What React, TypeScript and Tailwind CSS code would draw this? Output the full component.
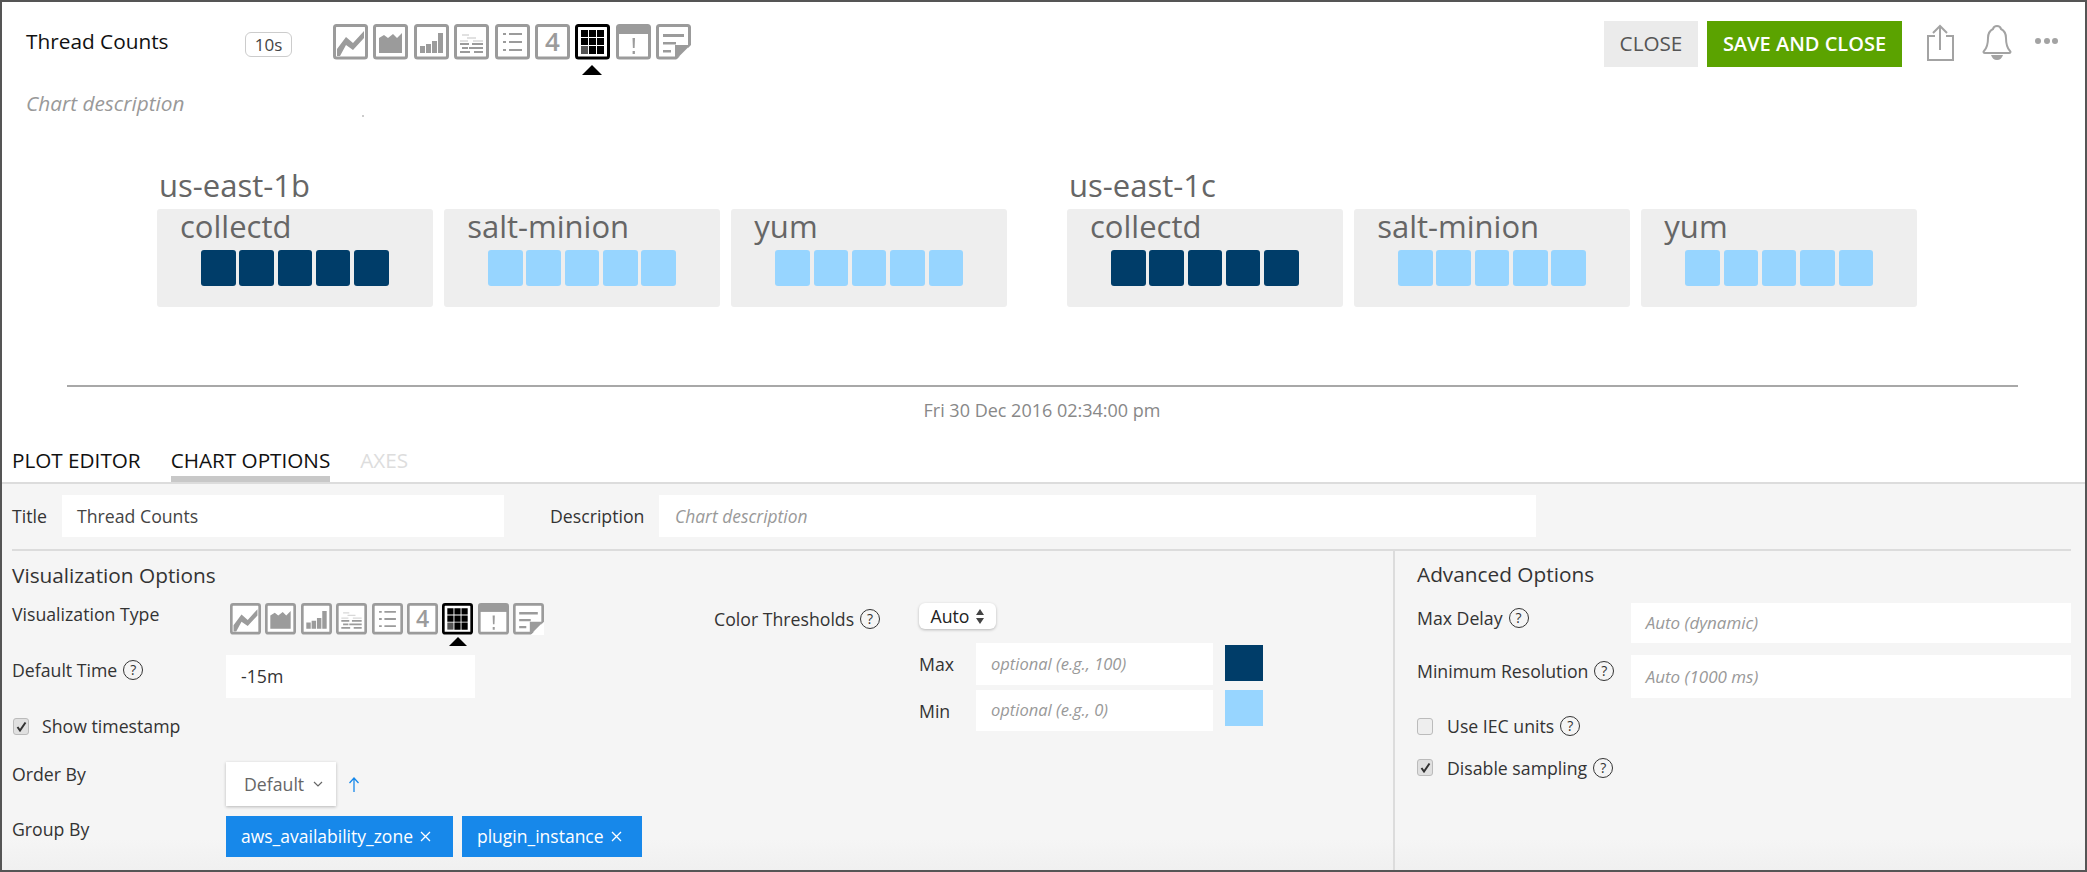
import React from 'react';

const FONT = "font-['Open_Sans','Noto_Sans',sans-serif]";

const VizIcon: React.FC<{ kind: number; size: number; active?: boolean }> = ({ kind, size, active }) => {
  const c = active ? '#000' : '#9b9b9b';
  return (
    <svg width={size} height={size + 1} viewBox="0 0 35 36" className="block shrink-0">
      <rect x="1.5" y="1.5" width="32" height="32.5" rx="2" fill="#fff" stroke={c} strokeWidth="3" />
      {kind === 0 && <path d="M4 32V25L13 13L20 19L31 7V14L20 26L13 21L7 32z" fill={c} />}
      {kind === 1 && <path d="M6 29V14L11 11L15 14L20 10L24 14L29 9V29z" fill={c} />}
      {kind === 2 && <path d="M6 22h5v7H6zM12 20h5v9h-5zM18 17h5v12h-5zM24 9h5v20h-5z" fill={c} />}
      {kind === 3 && (
        <g>
          <path d="M8 11h7M13 14h9M6 17h8M19 17h10" stroke="#d8d8d8" strokeWidth="1.5" />
          <path d="M6 20h9M18 20h11M8 24h6M15 24h14M6 28h10M20 28h9" stroke={c} strokeWidth="2" />
        </g>
      )}
      {kind === 4 && <path d="M8 10h3M14 10h13M8 18h3M14 18h13M8 26h3M14 26h13" stroke={c} strokeWidth="2" />}
      {kind === 5 && (
        <text x="17.5" y="27" textAnchor="middle" fontSize="26" fontWeight="600" fill={c} fontFamily="Open Sans, sans-serif">
          4
        </text>
      )}
      {kind === 6 && (
        <g fill="#000">
          <path d="M6 6h7v7H6zM14 6h7v7h-7zM22 6h7v7h-7zM6 14h7v7H6zM14 14h7v7h-7zM22 14h7v7h-7zM14 22h7v8h-7zM22 22h7v8h-7z" />
          <path d="M6 22h7v8H6z" fill="#555" />
        </g>
      )}
      {kind === 7 && (
        <g fill={c}>
          <path d="M1 1h33v9H1z" />
          <path d="M16.5 14h2.5l-.4 10h-1.7zM16.6 27h2.3v3h-2.3z" />
        </g>
      )}
      {kind === 8 && (
        <g>
          <path d="M7 10h21v3H7zM7 18h13v2.500H7zM7 26h8v2.500H7z" fill={c} />
          <path d="M35 21V36H20z" fill="#fff" />
          <path d="M34 21.500L20.500 35H19V21h15z" fill={c} />
        </g>
      )}
    </svg>
  );
};

const VizStrip: React.FC<{ size: number; gap: string; arrow: string }> = ({ size, gap, arrow }) => (
  <div className={`flex ${gap}`}>
    {[0, 1, 2, 3, 4, 5, 6, 7, 8].map(k => (
      <div key={k} className="relative">
        <VizIcon kind={k} size={size} active={k === 6} />
        {k === 6 && <div className={arrow} />}
      </div>
    ))}
  </div>
);

const Help: React.FC = () => (
  <span className="inline-flex h-[20px] w-[20px] shrink-0 items-center justify-center rounded-full border-[1.5px] border-[#333] text-[14px] leading-none text-[#333]">
    ?
  </span>
);

const Checkbox: React.FC<{ checked?: boolean }> = ({ checked }) => (
  <span
    className={`flex h-[17px] w-[16px] shrink-0 items-center justify-center rounded-[3px] border ${
      checked ? 'border-[#bbb] bg-[#e0e0e0]' : 'border-[#bbb] bg-[#eeeeee]'
    }`}
  >
    {checked && (
      <svg width="11" height="11" viewBox="0 0 11 11">
        <path d="M1.500 6L4 9.500L9.500 1.500" fill="none" stroke="#333" strokeWidth="2" />
      </svg>
    )}
  </span>
);

const Cell: React.FC<{ dark?: boolean }> = ({ dark }) => (
  <div className={`h-[36px] w-[34.500px] rounded-[3px] ${dark ? 'bg-[#003d69]' : 'bg-[#97d5ff]'}`} />
);

const Card: React.FC<{ name: string; dark?: boolean }> = ({ name, dark }) => (
  <div className="h-[98px] w-[276px] rounded-[3px] bg-[#eeeeee] pl-[23px]">
    <div className="h-[41px] text-[31px] leading-[34px] text-[#666]">{name}</div>
    <div className="ml-[21px] flex gap-[3.800px]">
      {[0, 1, 2, 3, 4].map(i => (
        <Cell key={i} dark={dark} />
      ))}
    </div>
  </div>
);

const Group: React.FC<{ zone: string; first: string }> = ({ zone, first }) => (
  <div className="w-[850px]">
    <div className="h-[37px] pl-[2px] text-[31px] leading-[26px] text-[#666]">{zone}</div>
    <div className="flex gap-[11.500px]">
      <Card name={first} dark />
      <Card name="salt-minion" />
      <Card name="yum" />
    </div>
  </div>
);

const Chip: React.FC<{ label: string; width: string }> = ({ label, width }) => (
  <div className={`flex h-[41px] ${width} items-center gap-[7px] bg-[#1788ea] pl-[15px] text-[17.500px] text-white`}>
    <span>{label}</span>
    <svg width="11" height="11" viewBox="0 0 11 11">
      <path d="M1 1l9 9M10 1l-9 9" stroke="#fff" strokeWidth="1.300" />
    </svg>
  </div>
);

export default function App() {
  return (
    <div className={`${FONT} flex h-[872px] w-[2087px] flex-col overflow-hidden border-2 border-[#555] bg-white`}>
      {/* header */}
      <div className="relative flex h-[110px] pl-[24px] pr-[27px] pt-[19px]">
        <div className="w-[219px]">
          <div className="mt-[3px] text-[20.800px] leading-[34px] text-[#111]">Thread Counts</div>
          <div className="mt-[33px] text-[20.800px] leading-[24px] text-[#999] italic">Chart description</div>
        </div>
        <div className="mt-[11px] mr-[41px] flex h-[25px] w-[47px] items-center justify-center rounded-[6px] border border-[#ccc] text-[17px] text-[#444]">
          10s
        </div>
        <div className="mt-[3px]">
          <VizStrip
            size={35}
            gap="gap-[5.400px]"
            arrow="absolute left-[7px] top-[41px] h-0 w-0 border-x-[10px] border-b-[10px] border-x-transparent border-b-black"
          />
        </div>
        <div className="ml-auto flex items-start">
          <div className="flex h-[46px] w-[94px] items-center justify-center bg-[#ebebeb] text-[20.700px] text-[#555]">CLOSE</div>
          <div className="ml-[9px] flex h-[46px] w-[195px] items-center justify-center bg-[#5ba300] text-[20px] font-semibold text-white">
            SAVE AND CLOSE
          </div>
          <svg width="28" height="38" viewBox="0 0 28 38" fill="none" stroke="#a3a3a3" strokeWidth="2" className="ml-[24px] mt-[3px]">
            <path d="M9 12H2v24h25V12h-7" />
            <path d="M14 26V2M7 9l7-7 7 7" />
          </svg>
          <svg width="30" height="37" viewBox="0 0 30 37" fill="none" stroke="#a3a3a3" strokeWidth="2" className="ml-[28px] mt-[3px]">
            <path d="M15 2c-2 0-3.500 1-4 3C7 7 6 10 6 14c0 6-1 10-4 13-1 1-.5 2 1 2h24c1.500 0 2-1 1-2-3-3-4-7-4-13 0-4-1-7-5-9-.5-2-2-3-4-3z" />
            <path d="M9 31h12c-1 3-3 5-6 5s-5-2-6-5z" fill="#a3a3a3" stroke="none" />
          </svg>
          <div className="ml-[23px] mt-[17px] flex gap-[2.500px]">
            <div className="h-[6px] w-[6px] rounded-full bg-[#a3a3a3]" />
            <div className="h-[6px] w-[6px] rounded-full bg-[#a3a3a3]" />
            <div className="h-[6px] w-[6px] rounded-full bg-[#a3a3a3]" />
          </div>
        </div>
        <div className="absolute left-[360px] top-[113px] h-[2px] w-[2px] bg-[#ccc]" />
      </div>

      {/* chart */}
      <div className="flex h-[273px] gap-[60px] pl-[155px] pt-[60px]">
        <Group zone="us-east-1b" first="collectd" />
        <Group zone="us-east-1c" first="collectd" />
      </div>

      {/* timestamp */}
      <div className="mx-[65px] h-[2px] w-[1951px] bg-[#a8a8a8]" />
      <div className="h-[48px] pr-[3px] pt-[11px] text-center text-[18px] leading-[24px] text-[#888]">Fri 30 Dec 2016 02:34:00 pm</div>

      {/* tabs */}
      <div className="flex h-[49px] items-start border-b-2 border-[#dcdcdc] pl-[10px] pt-[12px] text-[20.700px] leading-[26px]">
        <div className="text-[#111]">PLOT EDITOR</div>
        <div className="ml-[30px] h-[35px] border-b-[6px] border-[#c8c8c8] text-[#111]">CHART OPTIONS</div>
        <div className="ml-[30px] text-[#ddd]">AXES</div>
      </div>

      {/* options */}
      <div className="flex min-h-0 flex-1 flex-col bg-[linear-gradient(to_bottom,#f5f5f5_92%,#f0f0f0)] pl-[10px] text-[17.700px] text-[#333]">
        <div className="flex h-[65px] items-start pt-[11px]">
          <div className="w-[50px] pt-[9px] leading-[24px]">Title</div>
          <div className="flex h-[42px] w-[442px] items-center bg-white pl-[15px] text-[#444]">Thread Counts</div>
          <div className="ml-[46px] w-[109px] pt-[9px] leading-[24px]">Description</div>
          <div className="flex h-[42px] w-[877px] items-center bg-white pl-[16px] text-[17.400px] text-[#999] italic">Chart description</div>
        </div>
        <div className="flex min-h-0 flex-1">
          <div className="w-[1381px] border-t-2 border-[#dcdcdc]">
            <div className="flex">
              <div className="w-[702px]">
                <div className="pt-[10px] text-[20.800px] leading-[28px]">Visualization Options</div>
                <div className="mt-[14px] flex h-[39px] items-start">
                  <div className="-mt-[1px] w-[218px] leading-[24px]">Visualization Type</div>
                  <VizStrip
                    size={31}
                    gap="gap-[4.400px]"
                    arrow="absolute left-[7px] top-[34px] h-0 w-0 border-x-[9px] border-b-[9px] border-x-transparent border-b-black"
                  />
                </div>
                <div className="flex h-[60px] items-start pt-[13px]">
                  <div className="flex w-[214px] items-center gap-[6px] pt-[2px]">
                    Default Time <Help />
                  </div>
                  <div className="flex h-[43px] w-[249px] items-center bg-white pl-[15px] text-[#333]">-15m</div>
                </div>
                <div className="flex h-[52px] items-center gap-[13px] pb-[3px] pl-[1px]">
                  <Checkbox checked />
                  <span>Show timestamp</span>
                </div>
                <div className="flex h-[62px] items-start pt-[8px]">
                  <div className="w-[214px] leading-[24px]">Order By</div>
                  <div className="flex h-[44px] w-[110px] items-center bg-white pl-[18px] text-[#666] shadow-[0_1px_3px_rgba(0,0,0,0.25)]">
                    Default
                    <svg width="10" height="6" viewBox="0 0 10 6" className="ml-[9px]">
                      <path d="M1 1l4 4 4-4" fill="none" stroke="#666" strokeWidth="1.200" />
                    </svg>
                  </div>
                  <svg width="12" height="16" viewBox="0 0 12 16" className="ml-[12px] mt-[15px]">
                    <path d="M6 15V1M1.500 6L6 1l4.500 5" fill="none" stroke="#1788ea" strokeWidth="1.300" />
                  </svg>
                </div>
                <div className="flex items-start">
                  <div className="w-[214px] pt-[1px] leading-[24px]">Group By</div>
                  <Chip label="aws_availability_zone" width="w-[227px]" />
                  <div className="w-[9px]" />
                  <Chip label="plugin_instance" width="w-[180px]" />
                </div>
              </div>
              <div className="flex-1 pt-[52px]">
                <div className="flex h-[26px] items-start">
                  <div className="flex w-[205px] items-center gap-[6px] pt-[3px]">
                    Color Thresholds <Help />
                  </div>
                  <div className="flex h-[26px] w-[77px] items-center justify-center gap-[7px] rounded-[6px] bg-white text-[#222] shadow-[0_1px_3px_rgba(0,0,0,0.25)]">
                    Auto
                    <svg width="8" height="15" viewBox="0 0 8 15">
                      <path d="M4 0l4 6H0zM4 15l4-6H0z" fill="#444" />
                    </svg>
                  </div>
                </div>
                <div className="ml-[205px] mt-[14px] flex items-start">
                  <div className="w-[57px] pt-[9px] leading-[24px]">Max</div>
                  <div className="flex h-[42px] w-[237px] items-center bg-white pl-[15px] text-[16.500px] text-[#999] italic">optional (e.g., 100)</div>
                  <div className="ml-[12px] mt-[2px] h-[36px] w-[38px] bg-[#003d69]" />
                </div>
                <div className="ml-[205px] mt-[5px] flex items-start">
                  <div className="w-[57px] pt-[9px] leading-[24px]">Min</div>
                  <div className="flex h-[41px] w-[237px] items-center bg-white pl-[15px] text-[16.500px] text-[#999] italic">optional (e.g., 0)</div>
                  <div className="ml-[12px] h-[36px] w-[38px] bg-[#97d5ff]" />
                </div>
              </div>
            </div>
          </div>
          <div className="w-[678px] border-l-2 border-t-2 border-[#dcdcdc] pl-[22px]">
            <div className="pt-[9px] text-[20.800px] leading-[28px]">Advanced Options</div>
            <div className="mt-[15px] flex items-start">
              <div className="flex w-[214px] items-center gap-[6px] pt-[2px]">
                Max Delay <Help />
              </div>
              <div className="flex h-[40px] w-[441px] items-center bg-white pl-[15px] text-[17px] text-[#999] italic">Auto (dynamic)</div>
            </div>
            <div className="mt-[12px] flex items-start">
              <div className="flex w-[214px] items-center gap-[6px] pt-[3px]">
                Minimum Resolution <Help />
              </div>
              <div className="flex h-[43px] w-[441px] items-center bg-white pl-[15px] text-[17px] text-[#999] italic">Auto (1000 ms)</div>
            </div>
            <div className="mt-[15px] flex items-center gap-[14px]">
              <Checkbox />
              <span className="flex items-center gap-[6px]">
                Use IEC units <Help />
              </span>
            </div>
            <div className="mt-[15px] flex items-center gap-[14px]">
              <Checkbox checked />
              <span className="flex items-center gap-[6px]">
                Disable sampling <Help />
              </span>
            </div>
          </div>
        </div>
      </div>
    </div>
  );
}
